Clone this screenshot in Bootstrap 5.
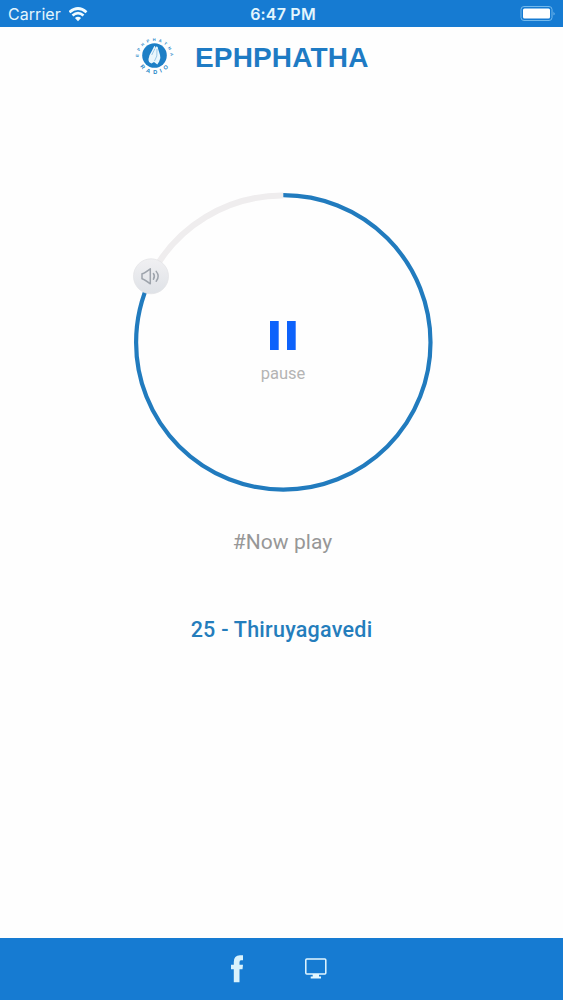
<!DOCTYPE html>
<html lang="en">
<head>
<meta charset="utf-8">
<meta name="viewport" content="width=device-width, initial-scale=1">
<title>Ephphatha</title>
<link href="https://cdn.jsdelivr.net/npm/bootstrap@5.3.0/dist/css/bootstrap.min.css" rel="stylesheet">
<style>
body{background:#fefefe;font-family:Roboto,"Liberation Sans",sans-serif;overflow:hidden}
svg{display:block;flex:none}
.bar{background:#167bd2;color:#e3f6fd}
.status{height:27px;padding:1px 7px 0 8px;font-family:Inter,"Liberation Sans",sans-serif;font-size:16px;line-height:26px}
.status>*{flex:1 1 0}
.carrier{letter-spacing:.05px}
.clock{font-weight:600;font-size:16px;letter-spacing:.2px;padding-left:2px}
.brand-row{height:60px;padding-left:133px}
.brand-name{font:bold 28px/60px "Liberation Sans",sans-serif;color:#1e7bc4;margin:2px 0 0 18px;letter-spacing:.15px}
.dial{width:330px;height:325px;margin:93px 0 0 120px}
.dial-center{padding:140px 4px 0 0}
.pause-text{font-size:16.5px;line-height:20px;color:#b4b4b4;letter-spacing:0;margin-top:14px}
.now{font-size:21px;line-height:28px;color:#979797;margin:23px 0 0 2px;letter-spacing:.05px}
.track{font-size:21.5px;line-height:28px;font-weight:500;color:#247dbc;margin:60px 0 0;letter-spacing:.25px}
.foot{height:62px;padding-left:229px}
.desktop-icon{margin-left:59px}
</style>
</head>
<body class="vh-100 d-flex flex-column">
<header class="bar status d-flex align-items-center">
  <div class="d-flex align-items-center">
    <span class="carrier">Carrier</span>
    <svg class="ms-2" width="19" height="15" viewBox="0 0 19 15" fill="none" stroke="#f0fbff" stroke-width="2.7"><path d="M.5 5.2Q9 -2.2 17.5 5.2M3.5 8.6Q9 3.8 14.5 8.6"/><path d="M5.9 10.9Q9 8.6 12.1 10.9L9 14.2Z" fill="#f0fbff" stroke="none"/></svg>
  </div>
  <div class="clock text-center">6:47 PM</div>
  <div class="d-flex justify-content-end">
    <svg width="36" height="18" viewBox="0 0 36 18"><rect x="1" y="1.5" width="31" height="14" rx="3" fill="none" stroke="#73b9ec"/><rect x="3" y="3.5" width="27" height="10" rx="1.5" fill="#fff"/><path d="M33.6 6.5q1.7 2 0 4z" fill="#9bcff3"/></svg>
  </div>
</header>
<div class="brand-row d-flex align-items-center">
  <svg width="44" height="44" viewBox="0 0 44 44">
    <defs><path id="arcTop" d="M5.5 22A16 16 0 0 1 37.5 22"/><path id="arcBottom" d="M4.7 27A17.8 17.8 0 0 0 38.3 27"/></defs>
    <circle cx="21.5" cy="20.5" r="12.3" fill="#1d7fc6"/>
    <path d="M18.5 28.5Q15.2 27.5 15.5 24Q16 20 18.5 16.5L21.3 11Q22.6 10.8 22.2 13L23.4 11.5Q25 11.2 25 13.5L27 20Q28.2 23.5 26.2 26.5L24.3 29.5L21 27Z" fill="#e9f6fc"/>
    <path d="M22 13.5L18.7 20M24 14L23.8 21L21.5 26" fill="none" stroke="#85bbdf" stroke-width=".8"/>
    <g font-family="Liberation Sans, sans-serif" font-weight="bold" fill="#2385c7"><text font-size="4"><textPath href="#arcTop" textLength="49">EPHPHATHA</textPath></text><text font-size="5.6"><textPath href="#arcBottom" startOffset="5" textLength="33">RADIO</textPath></text></g>
  </svg>
  <h1 class="brand-name">EPHPHATHA</h1>
</div>
<main class="flex-grow-1">
  <div class="dial position-relative">
    <svg class="position-absolute top-0 start-0" width="330" height="325" viewBox="0 0 330 325" fill="none">
      <defs><linearGradient id="knob" x2="0" y2="1"><stop stop-color="#f0f0f2"/><stop offset="1" stop-color="#dfe2e7"/></linearGradient></defs>
      <path d="M30.7 96.3A147.3 147.3 0 0 1 163.3 15.6" stroke="#efedee" stroke-width="6"/>
      <circle cx="163.3" cy="162.4" r="147.2" pathLength="100" stroke-dasharray="82.2 17.8" transform="rotate(-90 163.3 162.4)" stroke="#217bbe" stroke-width="4.2"/>
      <circle cx="31" cy="96.3" r="17.5" fill="url(#knob)" stroke="#e3e3e5" stroke-width=".7"/>
      <path d="M22 93.8Q24 93.5 30.3 88.8V103.8Q24 99.2 22 98.8Z" stroke="#9ea4ac" stroke-width="1.5" stroke-linejoin="round"/>
      <path d="M33.4 93.5Q35.4 96.3 33.4 99.2M36.2 91.4Q40.2 96.3 36.2 101.2" stroke="#9ea4ac" stroke-width="1.5" stroke-linecap="round"/>
    </svg>
    <div class="dial-center position-relative d-flex flex-column align-items-center">
      <svg width="30" height="30" viewBox="0 0 30 30"><path d="M2 1h8.7v29H2zM19 1h8.7v29H19z" fill="#0d62fb"/></svg>
      <div class="pause-text">pause</div>
    </div>
  </div>
  <p class="now text-center">#Now play</p>
  <p class="track text-center">25 - Thiruyagavedi</p>
</main>
<footer class="bar foot d-flex align-items-center">
  <svg width="16" height="30" viewBox="0 0 16 30"><path d="M4.8 28.2V15.3H2V10.7H4.8V8Q4.8 1.2 11 1.2H14V6.3H12Q10.5 6.3 10.5 8.2V10.7H14L13.5 15.3H10.5V28.2Z" fill="#d9f2fc"/></svg>
  <svg class="desktop-icon" width="24" height="24" viewBox="0 0 24 24"><rect x="1.8" y="2.1" width="20" height="14.8" rx="1" fill="none" stroke="#e3f7ff" stroke-width="1.5"/><path d="M8.7 17h6.3v2.6h2V21.5H6.7v-1.9h2z" fill="#e3f7ff"/></svg>
</footer>
<script src="https://cdn.jsdelivr.net/npm/bootstrap@5.3.0/dist/js/bootstrap.bundle.min.js"></script>
</body>
</html>
